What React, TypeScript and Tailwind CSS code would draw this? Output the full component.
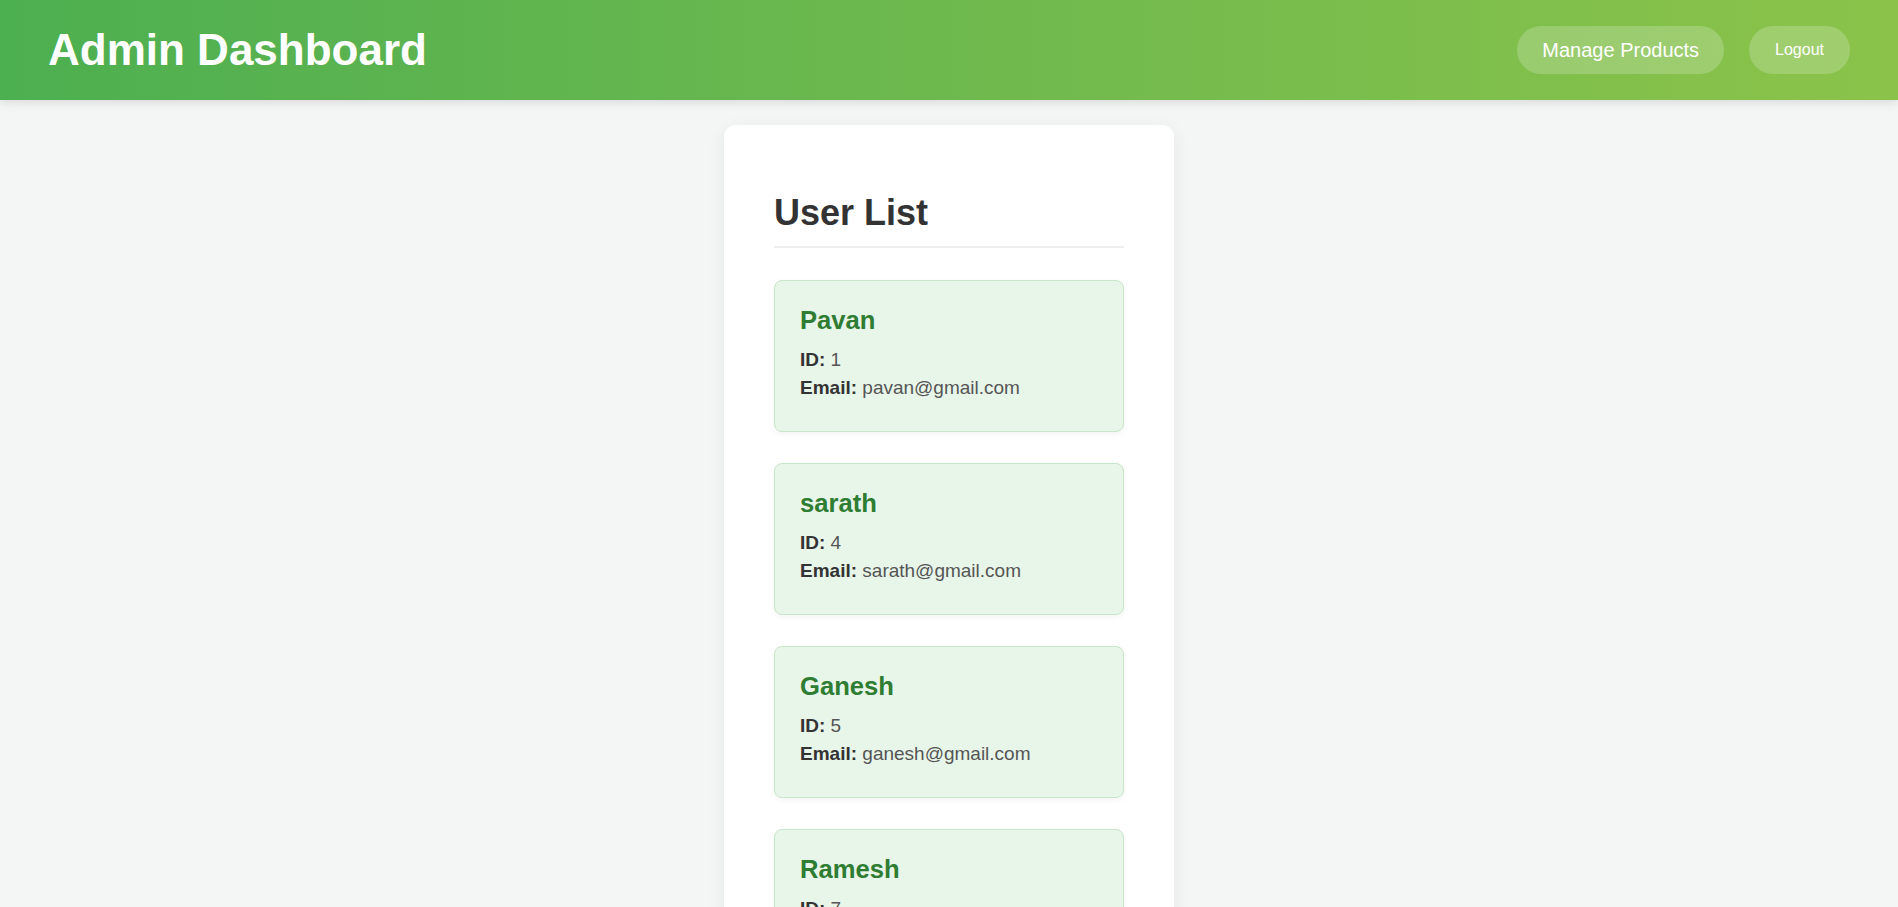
const users = [
  { id: 1, name: 'Pavan', email: 'pavan@gmail.com' },
  { id: 4, name: 'sarath', email: 'sarath@gmail.com' },
  { id: 5, name: 'Ganesh', email: 'ganesh@gmail.com' },
  { id: 7, name: 'Ramesh', email: 'ramesh@gmail.com' },
];

function UserCard({ user }: { user: { id: number; name: string; email: string } }) {
  return (
    <div className="rounded-[8px] border border-[#c8e6c9] bg-[#e8f5e9] px-[25px] pt-[25px] pb-[29px] shadow-[0_2px_6px_rgba(0,0,0,0.05)]">
      <h3 className="text-[25.6px] leading-[29px] font-bold text-[#2e7d32]">{user.name}</h3>
      <p className="mt-[11px] text-[19px] leading-[28px] text-[#555]">
        <strong className="text-[#333]">ID:</strong> {user.id}
      </p>
      <p className="text-[19px] leading-[28px] text-[#555]">
        <strong className="text-[#333]">Email:</strong> {user.email}
      </p>
    </div>
  );
}

export default function App() {
  return (
    <div className="min-h-screen bg-[#f4f6f5] font-['Liberation_Sans',Arial,sans-serif]">
      {/* Header */}
      <header className="relative z-10 flex h-[100px] items-center justify-between bg-gradient-to-r from-[#4caf50] to-[#8bc34a] pl-12 pr-[48px] shadow-[0_2px_10px_rgba(0,0,0,0.12)]">
        <h1 className="text-[44px] leading-none font-bold text-white">Admin Dashboard</h1>
        <div className="flex items-center gap-[25px]">
          <button className="h-12 rounded-full bg-white/20 px-[25px] text-[20px] text-white">
            Manage Products
          </button>
          <button className="h-12 rounded-full bg-white/20 px-[26px] text-[16px] text-white">
            Logout
          </button>
        </div>
      </header>

      {/* User list */}
      <main className="flex justify-center pt-[25px] pb-10">
        <div className="w-[450px] rounded-[12px] bg-white px-[50px] pt-[67px] pb-[50px] shadow-[0_4px_20px_rgba(0,0,0,0.06)]">
          <h2 className="border-b-2 border-[#eee] pb-[13px] text-[36px] leading-[41px] font-bold text-[#333]">
            User List
          </h2>
          <div className="mt-[32px] flex flex-col gap-[31px]">
            {users.map((u) => (
              <UserCard key={u.id} user={u} />
            ))}
          </div>
        </div>
      </main>
    </div>
  );
}
